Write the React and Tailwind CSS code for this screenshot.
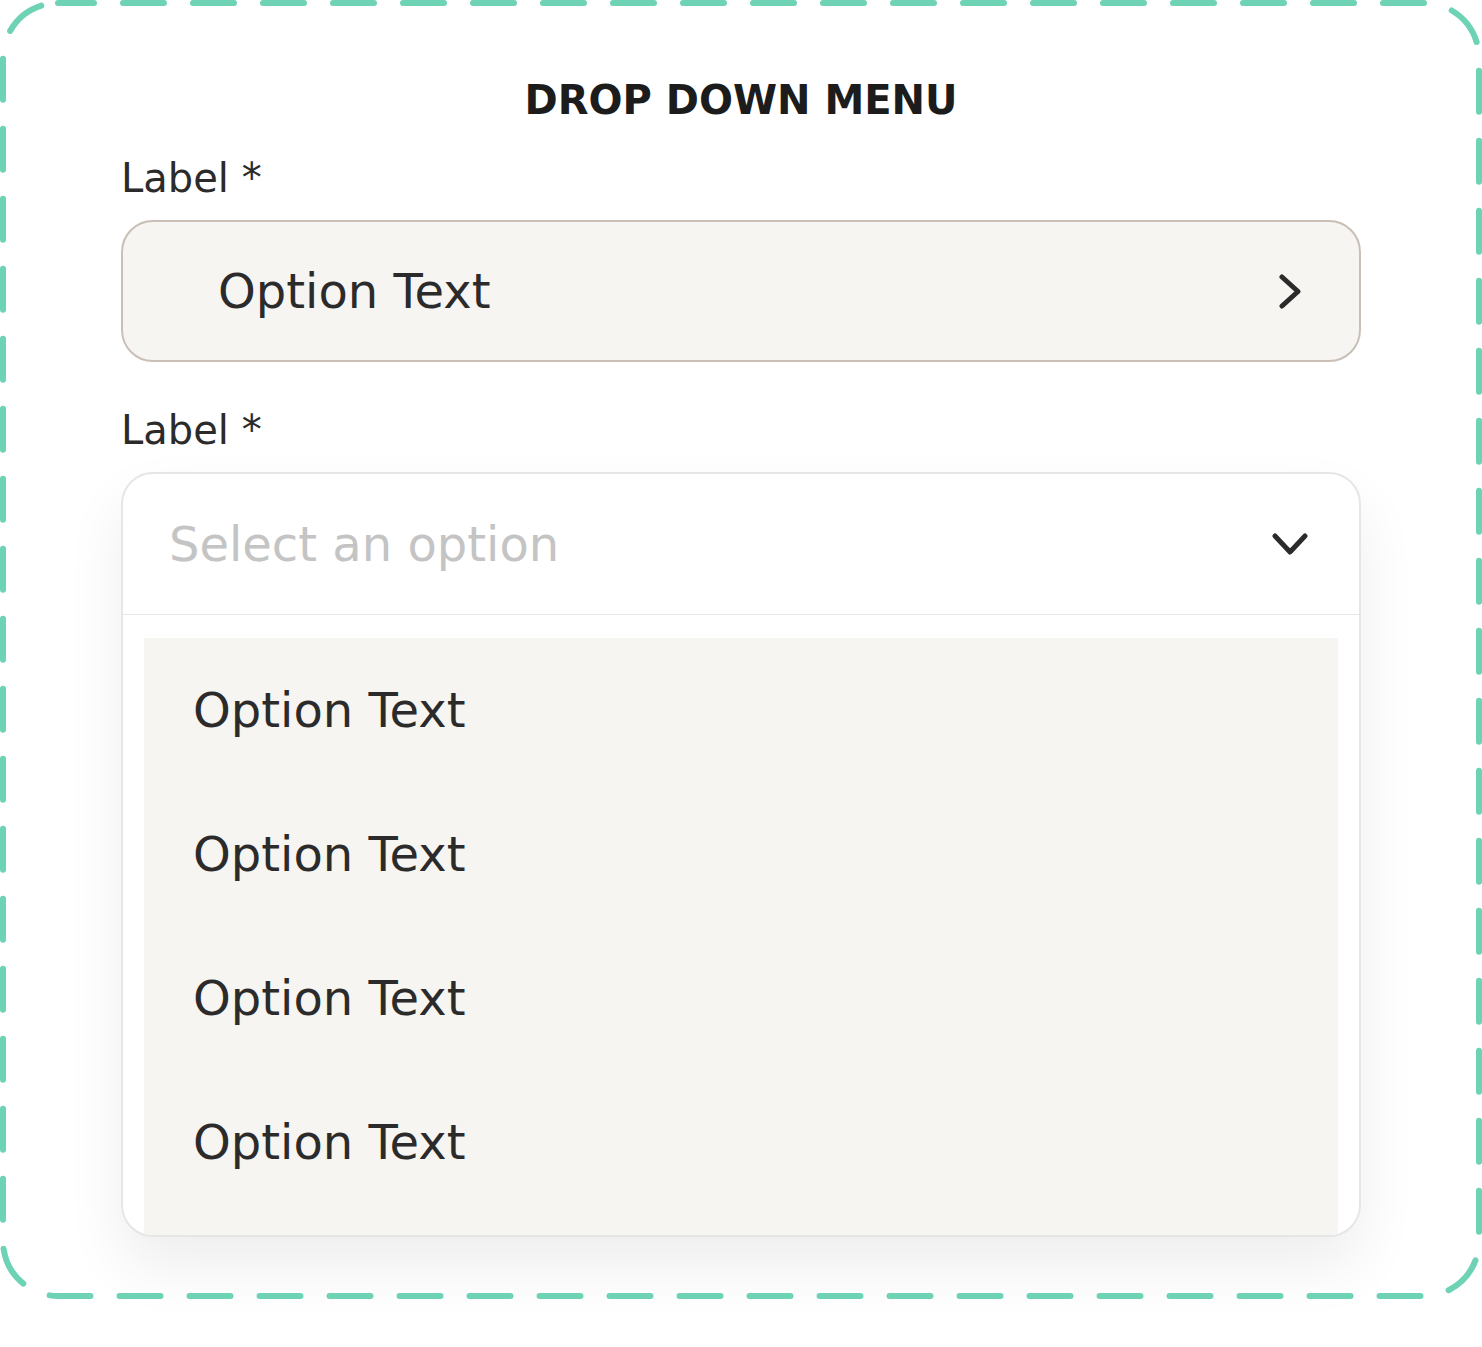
import React from 'react';

const font = { fontFamily: '"DejaVu Sans", "Noto Sans", sans-serif' };

const options = ['Option Text', 'Option Text', 'Option Text', 'Option Text'];

const ChevronRight = () => (
  <svg width="22" height="35" viewBox="0 0 22 35" fill="none">
    <path d="M3 3 L19 17.5 L3 32" stroke="#2b2b2b" strokeWidth="5" strokeLinecap="round" strokeLinejoin="round" />
  </svg>
);

const ChevronDown = () => (
  <svg width="36" height="22" viewBox="0 0 36 22" fill="none">
    <path d="M3 3 L18 19 L33 3" stroke="#2b2b2b" strokeWidth="5" strokeLinecap="round" strokeLinejoin="round" />
  </svg>
);

const App = () => {
  return (
    <div className="bg-white min-h-[1347px]" style={font}>
      <div className="relative h-[1300px] px-[121px]">
        {/* dashed frame around the component set */}
        <svg className="absolute inset-0 pointer-events-none" width="1482" height="1300">
          <rect
            x="3" y="3" width="1476" height="1293" rx="55"
            fill="none" stroke="#6dd3b4" strokeWidth="6"
            strokeDasharray="41 29" strokeDashoffset="5" strokeLinecap="round"
          />
        </svg>

        <h1 className="pt-[80px] text-center text-[40px] leading-[40px] font-bold text-[#1c1c1c]">
          DROP DOWN MENU
        </h1>

        <div className="mt-[34px] text-[40px] leading-[48px] text-[#2b2b2b]">Label *</div>
        <div className="mt-[18px] h-[142px] flex items-center justify-between pl-[95px] pr-[58px] bg-[#f6f5f2] border-2 border-[#c9bfb6] rounded-[32px]">
          <span className="text-[48px] text-[#2b2b2b]">Option Text</span>
          <ChevronRight />
        </div>

        <div className="mt-[44px] text-[40px] leading-[48px] text-[#2b2b2b]">Label *</div>
        <div className="mt-[18px] bg-white border-2 border-[#e6e6e6] rounded-[32px] overflow-hidden shadow-[0_30px_60px_rgba(0,0,0,0.07)]">
          <div className="h-[141px] flex items-center justify-between pl-[46px] pr-[51px] border-b border-[#e6e6e6]">
            <span className="text-[48px] text-[#c4c4c4]">Select an option</span>
            <ChevronDown />
          </div>
          <div className="px-[21px] pt-[23px]">
            <div className="bg-[#f6f5f2] pb-[21px]">
              {options.map((opt, i) => (
                <div key={i} className="h-[144px] flex items-center pl-[49px] text-[48px] text-[#2b2b2b]">
                  {opt}
                </div>
              ))}
            </div>
          </div>
        </div>
      </div>
    </div>
  );
};

export default App;
